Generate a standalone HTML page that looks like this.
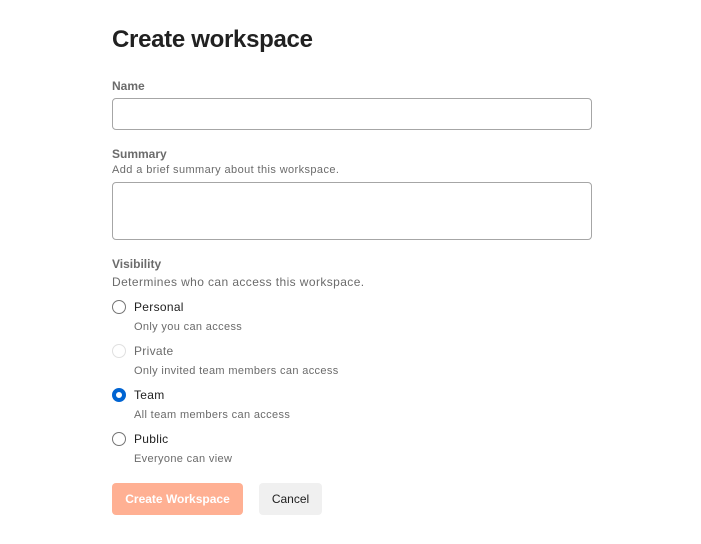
<!DOCTYPE html>
<html><head><style>
*{box-sizing:border-box;margin:0;padding:0}
body{width:701px;height:544px;background:#fff;font-family:"Liberation Sans",sans-serif;position:relative;color:#212121;overflow:hidden}
.a{position:absolute}
h1{position:absolute;left:112px;top:26px;font-size:24px;font-weight:bold;color:#212121;letter-spacing:-0.3px}
.lbl{font-size:12px;font-weight:bold;color:#6b6b6b}
.hint{font-size:11px;color:#6b6b6b;letter-spacing:0.4px}
.box{border:1px solid #a6a6a6;border-radius:4px;left:112px;width:480px}
.r{width:14px;height:14px;border-radius:50%;border:1px solid #757575;left:112px}
.opt{font-size:12px;color:#212121;left:134px;letter-spacing:0.3px}
.sub{font-size:11px;color:#6b6b6b;left:134px;letter-spacing:0.35px}
</style></head><body>
<h1>Create workspace</h1>
<div class="a lbl" style="left:112px;top:79px">Name</div>
<div class="a box" style="top:98px;height:32px"></div>
<div class="a lbl" style="left:112px;top:147px">Summary</div>
<div class="a hint" style="left:112px;top:164px">Add a brief summary about this workspace.</div>
<div class="a box" style="top:182px;height:58px"></div>
<div class="a lbl" style="left:112px;top:257px">Visibility</div>
<div class="a" style="left:112px;top:275px;font-size:12px;color:#6b6b6b;letter-spacing:0.4px">Determines who can access this workspace.</div>
<div class="a r" style="top:300px"></div>
<div class="a opt" style="top:300px">Personal</div>
<div class="a sub" style="top:321px">Only you can access</div>
<div class="a r" style="top:344px;border-color:#e0e0e0"></div>
<div class="a opt" style="top:344px;color:#6b6b6b">Private</div>
<div class="a sub" style="top:365px">Only invited team members can access</div>
<div class="a r" style="top:388px;border:4px solid #0064d2"></div>
<div class="a opt" style="top:388px">Team</div>
<div class="a sub" style="top:409px">All team members can access</div>
<div class="a r" style="top:432px"></div>
<div class="a opt" style="top:432px">Public</div>
<div class="a sub" style="top:453px">Everyone can view</div>
<div class="a" style="left:112px;top:483px;width:131px;height:32px;background:#ffb093;border-radius:4px;color:#fff;font-size:12px;font-weight:bold;text-align:center;line-height:32px">Create Workspace</div>
<div class="a" style="left:259px;top:483px;width:63px;height:32px;background:#f0f0f0;border-radius:4px;color:#212121;font-size:12px;text-align:center;line-height:32px">Cancel</div>
</body></html>
